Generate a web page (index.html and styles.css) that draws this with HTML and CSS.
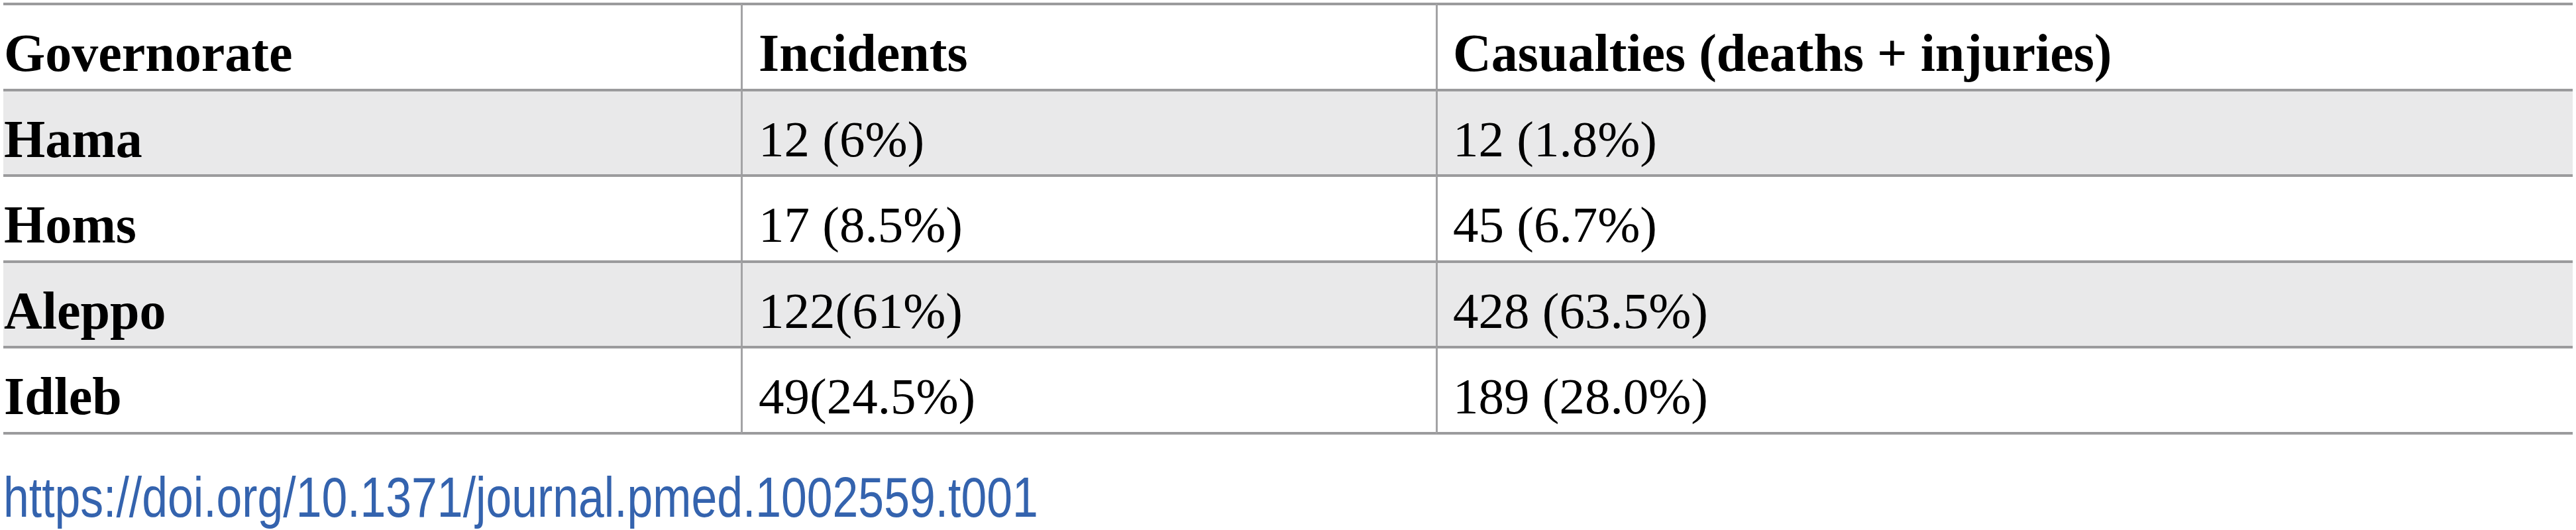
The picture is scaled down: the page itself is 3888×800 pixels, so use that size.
FILE: index.html
```html
<!DOCTYPE html>
<html lang="en">
<head>
<meta charset="utf-8">
<title>Table 1</title>
<link rel="stylesheet" href="styles.css">
</head>
<body>
<div class="figure">
  <table class="data">
    <thead>
      <tr>
        <th class="c1">Governorate</th>
        <th class="c2">Incidents</th>
        <th class="c3">Casualties (deaths + injuries)</th>
      </tr>
    </thead>
    <tbody>
      <tr class="shade">
        <th class="c1">Hama</th>
        <td class="c2">12 (6%)</td>
        <td class="c3">12 (1.8%)</td>
      </tr>
      <tr>
        <th class="c1">Homs</th>
        <td class="c2">17 (8.5%)</td>
        <td class="c3">45 (6.7%)</td>
      </tr>
      <tr class="shade">
        <th class="c1">Aleppo</th>
        <td class="c2">122(61%)</td>
        <td class="c3">428 (63.5%)</td>
      </tr>
      <tr class="last">
        <th class="c1">Idleb</th>
        <td class="c2">49(24.5%)</td>
        <td class="c3">189 (28.0%)</td>
      </tr>
    </tbody>
  </table>
  <div class="doi"><a class="doi-link" href="#">https://doi.org/10.1371/journal.pmed.1002559.t001</a></div>
</div>
</body>
</html>
```

FILE: styles.css
```css
html, body {
  margin: 0;
  padding: 0;
  background: #ffffff;
}

.figure {
  padding: 4px 5px 0 5px;
}

.data {
  width: 3878px;
  border-collapse: separate;
  border-spacing: 0;
  table-layout: fixed;
  font-family: "Liberation Serif", "Times New Roman", serif;
  color: #000;
}

.data th,
.data td {
  box-sizing: border-box;
  height: 129.5px;
  border-top: 4px solid #9b9b9d;
  padding: 26px 0 0 0;
  vertical-align: top;
  text-align: left;
  line-height: 92px;
  white-space: nowrap;
}

.data th {
  font-weight: bold;
  font-size: 80px;
}

.data td {
  font-weight: normal;
  font-size: 77px;
}

.data .c1 {
  width: 1113px;
  padding-left: 1px;
}

.data .c2 {
  width: 1049px;
  border-left: 3px solid #a3a3a5;
  padding-left: 24px;
}

.data .c3 {
  width: 1716px;
  border-left: 3px solid #a3a3a5;
  padding-left: 23px;
}

.shade th,
.shade td {
  background: #e9e9ea;
}

.last th,
.last td {
  height: 133.5px;
  border-bottom: 4px solid #9b9b9d;
}

.doi {
  margin-top: 45px;
  line-height: 100px;
}

.doi-link {
  display: inline-block;
  font-family: "Liberation Sans", Arial, sans-serif;
  font-size: 85px;
  line-height: 100px;
  color: #3463ae;
  text-decoration: none;
  border-bottom: 2px solid #f1f3f7;
  transform: scaleX(0.82);
  transform-origin: 0 0;
}
```
